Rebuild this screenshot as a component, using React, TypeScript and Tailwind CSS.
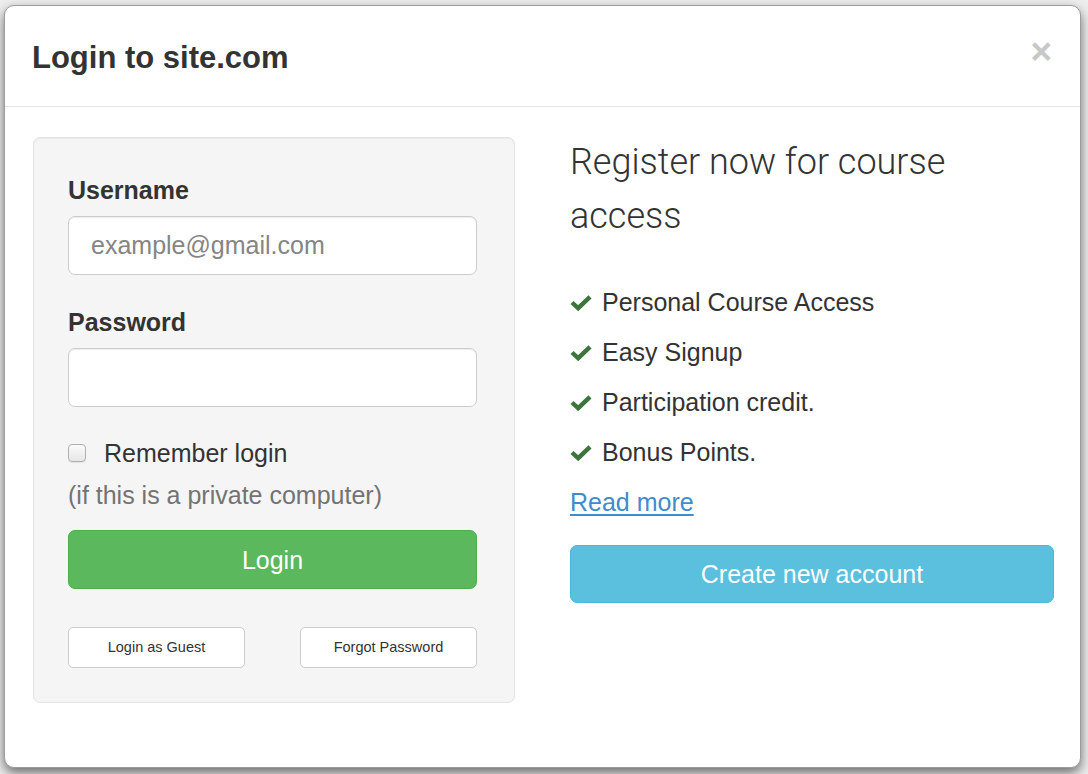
import React from "react";

const font = { fontFamily: '"Liberation Sans", Arial, Helvetica, sans-serif' };

function Check() {
  return (
    <svg width="22" height="17" viewBox="0 0 22 17" className="shrink-0">
      <path d="M2 8.5 L8.2 14.2 L20 2.8" fill="none" stroke="#3c763d" strokeWidth="4.4" strokeLinejoin="miter" />
    </svg>
  );
}

export default function App() {
  const features = ["Personal Course Access", "Easy Signup", "Participation credit.", "Bonus Points."];
  return (
    <div className="w-[1088px] h-[774px] overflow-hidden bg-[#eeeeee] pt-[5px] pl-[4px] text-[#333333]" style={font}>
      <div className="w-[1077px] h-[763px] bg-white border border-[#9c9c9c] rounded-[10px] shadow-[0_5px_12px_rgba(0,0,0,0.55)] flex flex-col">
        {/* header */}
        <div className="h-[101px] border-b border-[#e5e5e5] pt-[29px] pl-[27px] pr-[28px] flex justify-between items-start shrink-0">
          <h4 className="text-[31px] leading-[46px] font-bold text-[#333333]">Login to site.com</h4>
          <span className="text-[37px] leading-[46px] font-bold text-[#c8c8c8] -mt-[6px]">×</span>
        </div>
        {/* body */}
        <div className="flex pl-[28px] pt-[30px]">
          {/* left well */}
          <div className="w-[482px] bg-[#f5f5f5] border border-[#e3e3e3] rounded-[7px] shadow-[inset_0_1px_1px_rgba(0,0,0,0.05)] pl-[34px] pr-[37px] pt-[34px] pb-[34px] flex flex-col">
            <label className="text-[25px] leading-[36px] font-bold mb-[8px]">Username</label>
            <div className="h-[59px] bg-white border border-[#cccccc] rounded-[7px] shadow-[inset_0_1px_1px_rgba(0,0,0,0.075)] flex items-center px-[22px] text-[25px] text-[#858585]">
              example@gmail.com
            </div>
            <label className="text-[25px] leading-[36px] font-bold mt-[29px] mb-[8px]">Password</label>
            <div className="h-[59px] bg-white border border-[#cccccc] rounded-[7px] shadow-[inset_0_1px_1px_rgba(0,0,0,0.075)]"></div>
            <div className="mt-[28px] h-[36px] flex items-center">
              <span className="w-[18px] h-[18px] rounded-[4px] border border-[#b0b0b0] bg-gradient-to-b from-[#fbfbfb] to-[#e6e6e6] shadow-[0_1px_1px_rgba(0,0,0,0.08)] shrink-0"></span>
              <span className="ml-[18px] text-[25px] leading-[36px] text-[#333333]">Remember login</span>
            </div>
            <div className="mt-[6px] text-[25px] leading-[36px] text-[#737373]">(if this is a private computer)</div>
            <button className="mt-[17px] h-[59px] w-full bg-[#5cb85c] border border-[#4cae4c] rounded-[7px] text-white text-[25px] pt-[3px] flex items-center justify-center">
              Login
            </button>
            <div className="mt-[38px] flex justify-between">
              <button className="w-[177px] h-[41px] bg-white border border-[#cccccc] rounded-[5px] text-[14.5px] text-[#333333] flex items-center justify-center">
                Login as Guest
              </button>
              <button className="w-[177px] h-[41px] bg-white border border-[#cccccc] rounded-[5px] text-[14.5px] text-[#333333] flex items-center justify-center">
                Forgot Password
              </button>
            </div>
          </div>
          {/* right column */}
          <div className="w-[484px] ml-[55px] -mt-[4px] flex flex-col">
            <h3 className="text-[36px] leading-[54px] font-light text-[#333333] max-w-[430px] pt-[2px]" style={{ fontFamily: 'Roboto, "Liberation Sans", Arial, sans-serif' }}>
              Register now for course access
            </h3>
            <ul className="mt-[34px] flex flex-col">
              {features.map((f) => (
                <li key={f} className="h-[50px] flex items-center pt-[1px]">
                  <Check />
                  <span className="ml-[10px] text-[25px] text-[#333333]">{f}</span>
                </li>
              ))}
              <li className="h-[50px] flex items-center pt-[1px]">
                <a href="#" className="text-[25px] text-[#428bca] underline underline-offset-[3px]">Read more</a>
              </li>
            </ul>
            <button className="mt-[18px] h-[58px] w-full bg-[#5bc0de] border border-[#46b8da] rounded-[7px] text-white text-[25px] pt-[1px] flex items-center justify-center">
              Create new account
            </button>
          </div>
        </div>
      </div>
    </div>
  );
}
